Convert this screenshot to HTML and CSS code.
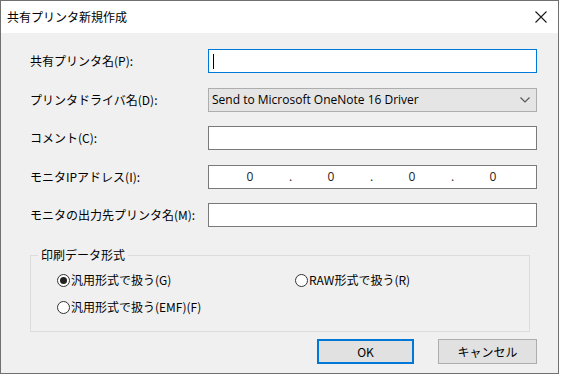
FILE: index.html
```html
<!DOCTYPE html>
<html lang="ja">
  <head>
    <meta charset="UTF-8" />
    <title>共有プリンタ新規作成</title>
    <link rel="stylesheet" href="styles.css">
  </head>
  <body>
    <div class="window">
      <div class="titlebar">
        <span class="title">共有プリンタ新規作成</span>
        <span class="close">
          <svg width="12" height="12" viewBox="0 0 12 12"><path d="M0.5 0.5 L11.5 11.5 M11.5 0.5 L0.5 11.5" stroke="#1a1a1a" stroke-width="1.1" fill="none"/></svg>
        </span>
      </div>
      <div class="content">
        <div class="form">
          <label class="label">共有プリンタ名(P):</label>
          <div class="field focus"><span class="caret"></span></div>

          <label class="label">プリンタドライバ名(D):</label>
          <div class="field combo">
            <span class="combo-text">Send to Microsoft OneNote 16 Driver</span>
            <svg class="chevron" width="10" height="6" viewBox="0 0 10 6"><path d="M0.5 0.5 L5 5 L9.5 0.5" stroke="#555" stroke-width="1.1" fill="none"/></svg>
          </div>

          <label class="label">コメント(C):</label>
          <div class="field"></div>

          <label class="label">モニタIPアドレス(I):</label>
          <div class="field ip">
            <span class="oct">0</span><span class="oct">.</span>
            <span class="oct">0</span><span class="oct">.</span>
            <span class="oct">0</span><span class="oct">.</span>
            <span class="oct">0</span>
          </div>

          <label class="label">モニタの出力先プリンタ名(M):</label>
          <div class="field"></div>
        </div>

        <fieldset class="group">
          <legend>印刷データ形式</legend>
          <div class="radios">
            <div class="radio"><span class="mark checked"></span>汎用形式で扱う(G)</div>
            <div class="radio"><span class="mark"></span>RAW形式で扱う(R)</div>
            <div class="radio"><span class="mark"></span>汎用形式で扱う(EMF)(F)</div>
          </div>
        </fieldset>

        <div class="buttons">
          <button class="btn ok">OK</button>
          <button class="btn cancel">キャンセル</button>
        </div>
      </div>
    </div>
  </body>
</html>
```

FILE: styles.css
```css
html,
body {
  margin: 0;
  background: #fff;
}
.window {
  width: 559px;
  height: 374px;
  box-sizing: border-box;
  border: 1px solid #707070;
  background: #f0f0f0;
  display: flex;
  flex-direction: column;
  font-family: "Noto Sans CJK JP", sans-serif;
  font-size: 12px;
  color: #000;
}
.titlebar {
  height: 32px;
  flex: none;
  background: #fff;
  display: flex;
  align-items: center;
  padding-left: 6px;
}
.title {
  line-height: 16px;
}
.close {
  margin-left: auto;
  width: 34px;
  display: flex;
  justify-content: center;
}
.content {
  padding: 16px 20px 0 29px;
}
.form {
  display: grid;
  grid-template-columns: 178px 329px;
  grid-auto-rows: 24px;
  row-gap: 14.5px;
  align-items: center;
}
.label {
  line-height: 16px;
}
.field {
  height: 24px;
  box-sizing: border-box;
  border: 1px solid #7a7a7a;
  background: #fff;
  display: flex;
  align-items: center;
}
.field.focus {
  border-color: #0078d7;
}
.caret {
  width: 1px;
  height: 15px;
  margin-left: 4px;
  background: #000;
}
.combo {
  background: #e5e5e5;
  border-color: #adadad;
  padding: 0 6px 0 3px;
}
.combo-text {
  font-family: "Open Sans", "Noto Sans", sans-serif;
  font-size: 12px;
  line-height: 16px;
}
.chevron {
  margin-left: auto;
}
.ip {
  padding-left: 31px;
  gap: 20.5px;
  color: #222;
}
.oct {
  width: 20px;
  text-align: center;
  font-family: "Open Sans", "Noto Sans", sans-serif;
  line-height: 16px;
}
.group {
  margin: 20px 0 0 0;
  width: 500px;
  box-sizing: border-box;
  border: 1px solid #dcdcdc;
  padding: 0 0 16px 0;
  min-width: 0;
}
.group legend {
  margin-left: 7px;
  padding: 0 3px;
  line-height: 16px;
}
.radios {
  display: grid;
  grid-template-columns: 238px auto;
  row-gap: 11px;
  padding: 9px 0 0 26px;
}
.radio {
  display: flex;
  align-items: center;
  line-height: 16px;
}
.mark {
  width: 13px;
  height: 13px;
  box-sizing: border-box;
  border: 1px solid #333;
  border-radius: 50%;
  background: #fff;
  margin-right: 1px;
  display: flex;
  align-items: center;
  justify-content: center;
}
.mark.checked::after {
  content: "";
  width: 7px;
  height: 7px;
  border-radius: 50%;
  background: #222;
}
.buttons {
  display: flex;
  justify-content: flex-end;
  gap: 24px;
  margin-top: 7px;
  padding-right: 1px;
}
.btn {
  height: 25px;
  box-sizing: border-box;
  background: #e1e1e1;
  border: 1px solid #adadad;
  font-family: "Noto Sans CJK JP", sans-serif;
  font-size: 12px;
  color: #000;
  padding: 0;
}
.btn.ok {
  width: 97px;
  border: 2px solid #0078d7;
}
.btn.cancel {
  width: 99px;
}
```
